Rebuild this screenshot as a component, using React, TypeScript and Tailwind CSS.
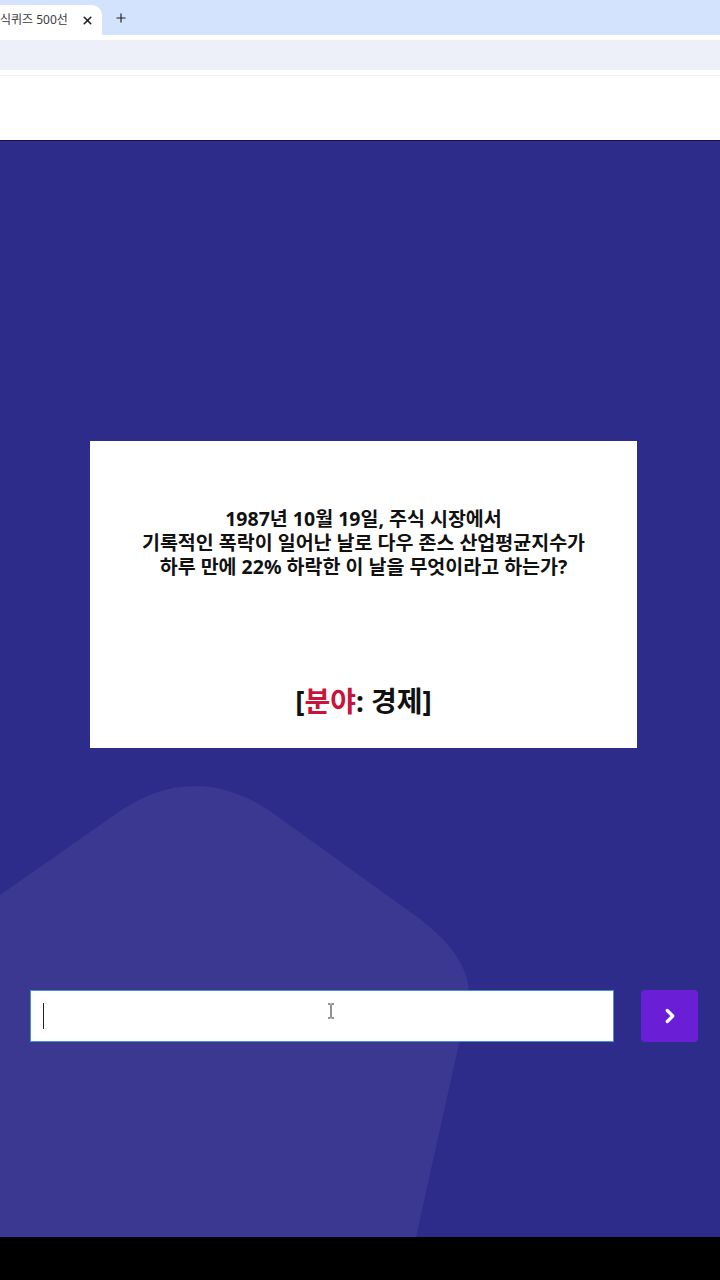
import { X, Plus, ChevronRight } from "lucide-react";

const font = { fontFamily: '"Noto Sans", "Noto Sans CJK KR", sans-serif' };

function BrowserChrome() {
  return (
    <div className="flex flex-col">
      {/* tab strip */}
      <div className="h-[35px] bg-[#d3e3fd] flex items-end">
        <div className="h-[30px] w-[102px] bg-white rounded-tr-[10px] flex items-center pr-2">
          <span className="text-[12px] text-[#3c3c3c] whitespace-nowrap leading-none">식퀴즈 500선</span>
          <X className="w-[13px] h-[13px] ml-auto text-[#1f1f1f]" strokeWidth={3} />
        </div>
        <div className="h-[35px] flex items-center pl-[12px]">
          <Plus className="w-[14px] h-[14px] text-[#1f1f1f]" strokeWidth={2} />
        </div>
      </div>
      {/* toolbar */}
      <div className="h-[5px] bg-white" />
      <div className="h-[30px] bg-[#eef0f9]" />
      <div className="h-[6px] bg-white border-b border-[#f3eeee]" />
      {/* page header */}
      <div className="h-[64px] bg-white" />
      <div className="h-[1px] bg-[#14124a]" />
    </div>
  );
}

function Blob() {
  return (
    <svg className="absolute inset-0 w-full h-full" viewBox="0 0 720 1096" preserveAspectRatio="none">
      <path
        d="M0 754 L120 670 Q195 620 270 670 L420 778 Q475 820 468 862 L416 1096 L0 1096 Z"
        fill="#3a3891"
      />
    </svg>
  );
}

export default function App() {
  return (
    <div className="w-[720px] h-[1280px] flex flex-col overflow-hidden" style={font}>
      <BrowserChrome />
      <div className="relative flex-1 bg-[#2e2c8b] overflow-hidden">
        <Blob />
        <div className="relative flex flex-col">
          <div className="ml-[90px] mt-[300px] w-[547px] h-[307px] bg-white flex flex-col items-center pt-[66px]">
            <p className="text-[19.5px] font-bold leading-[24px] text-[#111] text-center">
              1987년 10월 19일, 주식 시장에서
              <br />
              기록적인 폭락이 일어난 날로 다우 존스 산업평균지수가
              <br />
              하루 만에 22% 하락한 이 날을 무엇이라고 하는가?
            </p>
            <p className="mt-auto mb-[33px] text-[28px] font-bold text-[#111] leading-none">
              [<span className="text-[#c8133b]">분야</span>: 경제]
            </p>
          </div>
          <div className="mt-[242px] flex items-center">
            <div className="ml-[30px] w-[584px] h-[52px] bg-white border border-[#4a8fd8] relative flex items-center">
              <div className="ml-[12px] w-[1px] h-[26px] bg-[#222]" />
              <svg className="absolute left-[296px] top-[12px]" width="8" height="16" viewBox="0 0 8 16">
                <path d="M1 1h2.5M4.5 1H7M4 1.5v13M1 15h2.5M4.5 15H7" stroke="#222" strokeWidth="1" fill="none" />
              </svg>
            </div>
            <button className="ml-[27px] w-[57px] h-[52px] bg-[#6a1fd6] rounded-[4px] flex items-center justify-center">
              <ChevronRight className="w-[22px] h-[22px] text-white" strokeWidth={3.5} />
            </button>
          </div>
        </div>
      </div>
      <div className="h-[43px] bg-black" />
    </div>
  );
}
